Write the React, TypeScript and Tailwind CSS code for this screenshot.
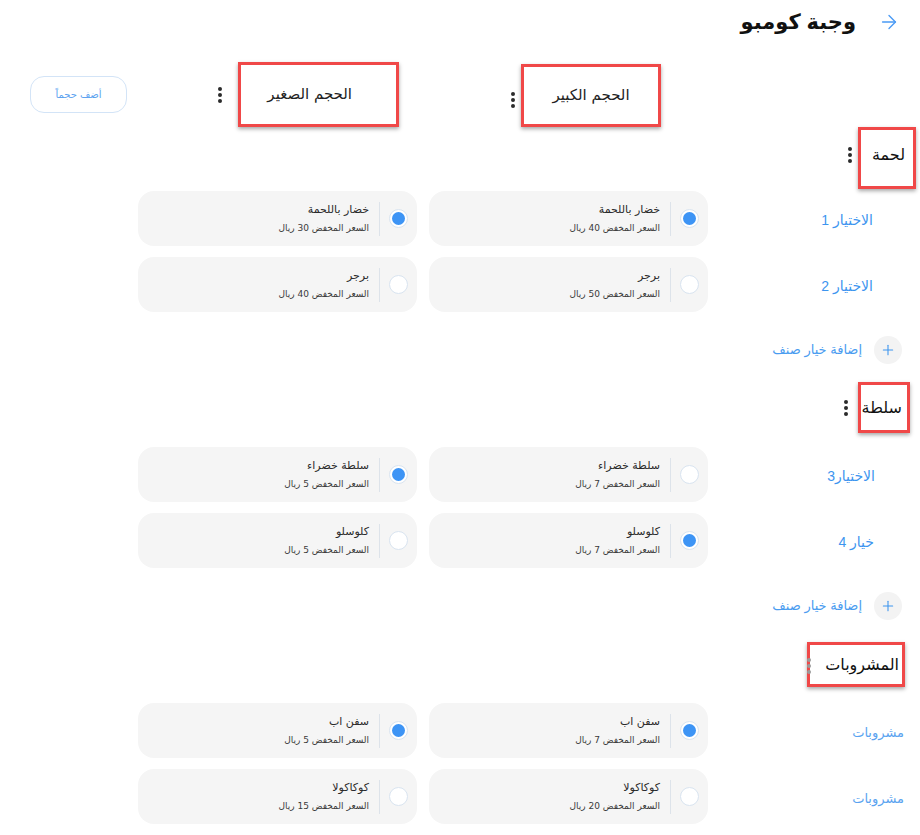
import React from "react";
import { ArrowRight, Plus } from "lucide-react";

const AR = { fontFamily: '"DejaVu Sans", "Noto Sans", sans-serif' };
const AR2 = { fontFamily: 'Arial, "Liberation Sans", "DejaVu Sans", sans-serif' };

function Dots({ light = false }: { light?: boolean }) {
  const c = light ? "bg-[#9a9a9a]" : "bg-[#2b2b2b]";
  return (
    <div className="flex flex-col gap-[2px]">
      <span className={`w-[4px] h-[4px] rounded-full ${c}`} />
      <span className={`w-[4px] h-[4px] rounded-full ${c}`} />
      <span className={`w-[4px] h-[4px] rounded-full ${c}`} />
    </div>
  );
}

function Radio({ on }: { on: boolean }) {
  return (
    <div className="w-[19px] h-[19px] rounded-full bg-white border border-[#d9e4f0] flex items-center justify-center shrink-0">
      {on && <div className="w-[13px] h-[13px] rounded-full bg-[#3d94f5]" />}
    </div>
  );
}

function Card({ name, price, on }: { name: string; price: string; on: boolean }) {
  return (
    <div className="w-[279px] h-[55px] rounded-[16px] bg-[#f5f5f5] flex items-center pr-[9px]">
      <Radio on={on} />
      <div className="w-px h-[34px] bg-[#dde3ea] mr-[9px]" />
      <div className="mr-[10px] flex flex-col gap-[5px]" style={AR}>
        <div className="text-[11px] leading-[14px] text-[#2a2a2a]">{name}</div>
        <div className="text-[9px] leading-[12px] text-[#3a3a3a]">{price}</div>
      </div>
    </div>
  );
}

function Row({
  label,
  pr,
  light,
  cards,
}: {
  label: string;
  pr: string;
  light?: boolean;
  cards: [string, string, boolean][];
}) {
  return (
    <div className="flex items-center h-[55px]">
      <div className={`w-[212px] ${pr}`}>
        <span
          className={`${light ? "text-[13px] text-[#5aa3f0]" : "text-[14px] text-[#3d95ef]"}`}
          style={AR2}
        >
          {label}
        </span>
      </div>
      <div className="flex gap-[12px]">
        {cards.map(([n, p, o], i) => (
          <Card key={i} name={n} price={p} on={o} />
        ))}
      </div>
    </div>
  );
}

function AddRow() {
  return (
    <div className="flex items-center h-[28px] pr-[18px] gap-[12px]">
      <div className="w-[28px] h-[28px] rounded-full bg-[#f3f3f3] flex items-center justify-center">
        <Plus size={16} strokeWidth={1.6} color="#3d95ef" />
      </div>
      <span className="text-[13px] text-[#4a9cf0]" style={AR2}>
        إضافة خيار صنف
      </span>
    </div>
  );
}

const redBox = "border-[3px] border-[#f04848] shadow-[0_2px_4px_rgba(0,0,0,0.35)] bg-white";

export default function App() {
  return (
    <div dir="rtl" className="w-[920px] h-[835px] bg-white overflow-hidden relative">
      {/* title */}
      <div className="flex items-center h-[44px] pr-[20px] gap-[22px]">
        <ArrowRight size={22} strokeWidth={1.5} color="#4a9af5" />
        <span className="text-[21px] font-bold text-[#111]" style={AR2}>
          وجبة كومبو
        </span>
      </div>

      {/* column headers */}
      <div className="flex h-[65px] mt-[18px]">
        <div className="w-[212px]" />
        <div className="w-[279px] flex items-end pr-[47px]">
          <div className={`w-[140px] h-[63px] ${redBox} flex items-center justify-center`}>
            <span className="text-[15px] text-[#222]" style={AR}>
              الحجم الكبير
            </span>
          </div>
          <div className="mr-[6px] mb-[19px]">
            <Dots />
          </div>
        </div>
        <div className="w-[12px]" />
        <div className="w-[279px] flex items-center pr-[18px]">
          <div className={`w-[161px] h-[65px] ${redBox} flex items-center pr-[44px]`}>
            <span className="text-[15px] text-[#222]" style={AR}>
              الحجم الصغير
            </span>
          </div>
          <div className="mr-[16px]">
            <Dots />
          </div>
        </div>
        <div className="flex items-center pr-[11px]">
          <div className="w-[97px] h-[37px] rounded-[14px] border border-[#d3e4f7] flex items-center justify-center">
            <span className="text-[10px] text-[#5ea3f0]" style={AR}>
              أضف حجماً
            </span>
          </div>
        </div>
      </div>

      {/* section لحمة */}
      <div className="flex items-start pr-[4px]">
        <div className={`w-[58px] h-[62px] ${redBox} pr-[8px] pt-[12px]`}>
          <span className="text-[16px] text-[#111]" style={AR2}>لحمة</span>
        </div>
        <div className="mr-[6px] mt-[20px]">
          <Dots />
        </div>
      </div>

      <div className="mt-[2px] flex flex-col gap-[11px]">
        <Row
          label="الاختيار 1"
          pr="pr-[47px]"
          cards={[
            ["خضار باللحمة", "السعر المخفض 40 ريال", true],
            ["خضار باللحمة", "السعر المخفض 30 ريال", true],
          ]}
        />
        <Row
          label="الاختيار 2"
          pr="pr-[47px]"
          cards={[
            ["برجر", "السعر المخفض 50 ريال", false],
            ["برجر", "السعر المخفض 40 ريال", false],
          ]}
        />
      </div>

      <div className="mt-[24px]">
        <AddRow />
      </div>

      {/* section سلطة */}
      <div className="flex items-center pr-[10px] mt-[18px]">
        <div className={`w-[52px] h-[51px] ${redBox} flex items-center pr-[5px]`}>
          <span className="text-[16px] text-[#111]" style={AR2}>سلطة</span>
        </div>
        <div className="mr-[10px]">
          <Dots />
        </div>
      </div>

      <div className="mt-[14px] flex flex-col gap-[11px]">
        <Row
          label="الاختيار3"
          pr="pr-[45px]"
          cards={[
            ["سلطة خضراء", "السعر المخفض 7 ريال", false],
            ["سلطة خضراء", "السعر المخفض 5 ريال", true],
          ]}
        />
        <Row
          label="خيار 4"
          pr="pr-[46px]"
          cards={[
            ["كلوسلو", "السعر المخفض 7 ريال", true],
            ["كلوسلو", "السعر المخفض 5 ريال", false],
          ]}
        />
      </div>

      <div className="mt-[24px]">
        <AddRow />
      </div>

      {/* section المشروبات */}
      <div className="flex items-center pr-[15px] mt-[22px] relative">
        <div className={`w-[98px] h-[45px] ${redBox} flex items-center pr-[3px]`}>
          <span className="text-[16px] text-[#111]" style={AR2}>المشروبات</span>
        </div>
        <div className="absolute right-[109px] top-[16px]">
          <Dots light />
        </div>
      </div>

      <div className="mt-[16px] flex flex-col gap-[11px]">
        <Row
          light
          label="مشروبات"
          pr="pr-[16px]"
          cards={[
            ["سفن اب", "السعر المخفض 7 ريال", true],
            ["سفن اب", "السعر المخفض 5 ريال", true],
          ]}
        />
        <Row
          light
          label="مشروبات"
          pr="pr-[16px]"
          cards={[
            ["كوكاكولا", "السعر المخفض 20 ريال", false],
            ["كوكاكولا", "السعر المخفض 15 ريال", false],
          ]}
        />
      </div>
    </div>
  );
}
